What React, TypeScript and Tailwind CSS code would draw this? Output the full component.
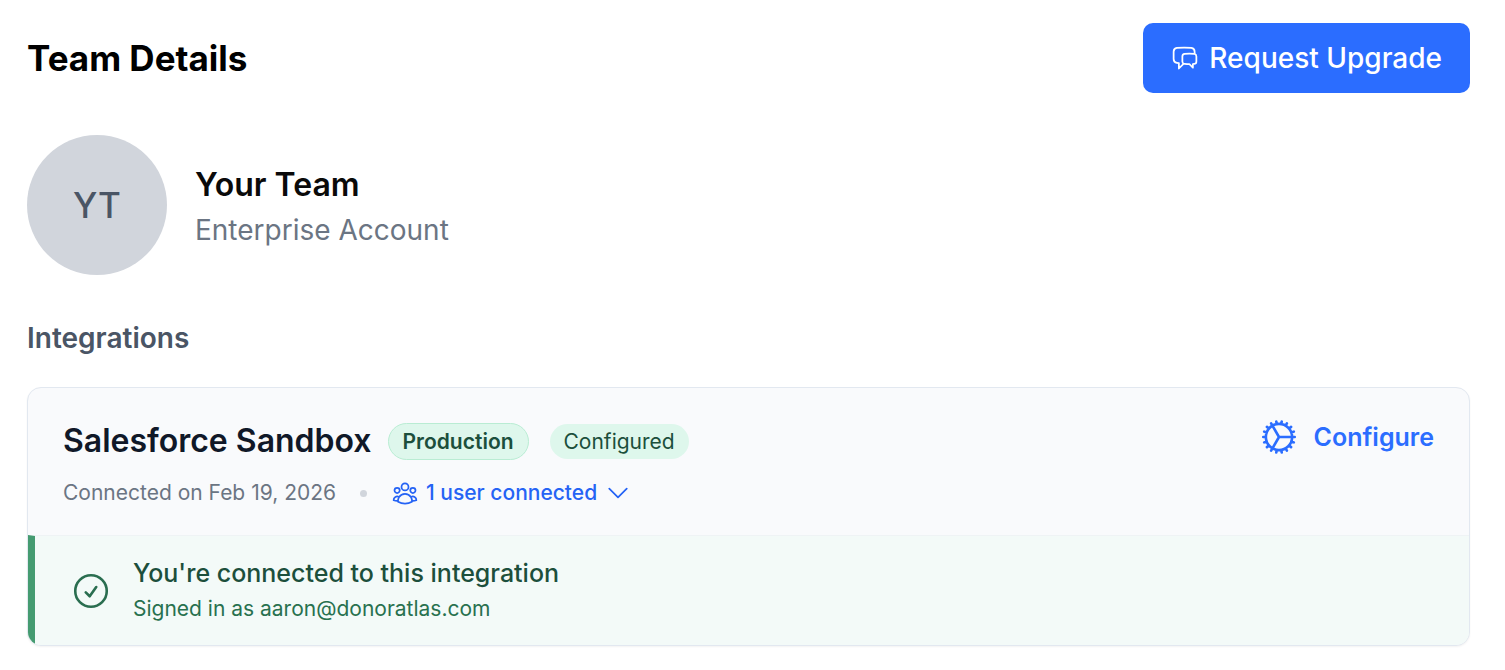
import {
  HiOutlineChatBubbleLeftRight,
  HiOutlineCheckCircle,
  HiOutlineChevronDown,
  HiOutlineCog,
  HiOutlineUserGroup,
} from "react-icons/hi2";

function PageHeader() {
  return (
    <header className="flex items-center justify-between">
      <h1 className="text-[35px] leading-[48px] font-bold text-black">Team Details</h1>
      <button
        type="button"
        className="flex h-[70px] items-center gap-2.5 rounded-[10px] bg-[#2b6dff] px-7 text-[28px] leading-10 font-medium text-white"
      >
        <HiOutlineChatBubbleLeftRight className="size-7" aria-hidden="true" />
        Request Upgrade
      </button>
    </header>
  );
}

function TeamSummary() {
  return (
    <section className="mt-[42px] flex items-center gap-7">
      <div className="flex size-[140px] shrink-0 items-center justify-center rounded-full bg-[#d1d5dc] text-[35px] leading-[48px] font-medium text-[#4a5565]">
        YT
      </div>
      <div className="pt-0.5">
        <h2 className="text-[32px] leading-[48px] font-semibold text-[#0a0a0a]">Your Team</h2>
        <p className="text-[28px] leading-[42px] text-[#6b7583]">Enterprise Account</p>
      </div>
    </section>
  );
}

function IntegrationCard() {
  return (
    <article className="mt-7 overflow-hidden rounded-[14px] border border-[#e2e8f0] bg-[#f9fafc] shadow-xs">
      <div className="flex items-start justify-between px-[35px] pt-7 pb-[25px]">
        <div>
          <div className="flex items-center gap-4">
            <h3 className="text-[32px] leading-[50px] font-semibold text-[#101828]">Salesforce Sandbox</h3>
            <div className="flex items-center gap-[21px]">
              <span className="rounded-full border border-[#b9ecd3] bg-[#def7ec] px-[14px] text-[21px] leading-[35px] font-semibold text-[#1c4f3c]">
                Production
              </span>
              <span className="rounded-full bg-[#def7ec] px-[14px] text-[21px] leading-[35px] text-[#1c4f3c]">
                Configured
              </span>
            </div>
          </div>
          <div className="mt-2.5 flex items-center text-[21px] leading-[34px]">
            <span className="text-[#6b7583]">Connected on Feb 19, 2026</span>
            <span className="mx-6 size-[7px] rounded-full bg-[#d1d5dc]" />
            <button type="button" className="flex items-center gap-[7px] font-medium text-[#2563f5]">
              <HiOutlineUserGroup className="size-7" aria-hidden="true" />
              1 user connected
              <HiOutlineChevronDown className="size-7" aria-hidden="true" />
            </button>
          </div>
        </div>
        <button
          type="button"
          className="flex items-center gap-[14px] text-[25px] leading-[42px] font-semibold text-[#2b6dff]"
        >
          <HiOutlineCog className="size-[42px]" aria-hidden="true" />
          Configure
        </button>
      </div>
      <div className="flex items-center gap-[21px] border-t border-l-[7px] border-t-[#eff3f5] border-l-[#459b71] bg-[#f3faf8] pt-5 pb-[19px] pl-[35px]">
        <HiOutlineCheckCircle className="size-[42px] text-[#2a6e50]" aria-hidden="true" />
        <div>
          <p className="text-[25px] leading-[35px] font-medium text-[#1c4f3c]">You're connected to this integration</p>
          <p className="text-[21px] leading-[35px] text-[#28714f]">Signed in as aaron@donoratlas.com</p>
        </div>
      </div>
    </article>
  );
}

export default function App() {
  return (
    <main className="min-h-screen bg-white pt-[23px] pr-[35px] pb-6 pl-[27px] font-['Inter',sans-serif]">
      <PageHeader />
      <TeamSummary />
      <section className="mt-[42px]">
        <h2 className="text-[28px] leading-[42px] font-semibold text-[#4a5565]">Integrations</h2>
        <IntegrationCard />
      </section>
    </main>
  );
}
